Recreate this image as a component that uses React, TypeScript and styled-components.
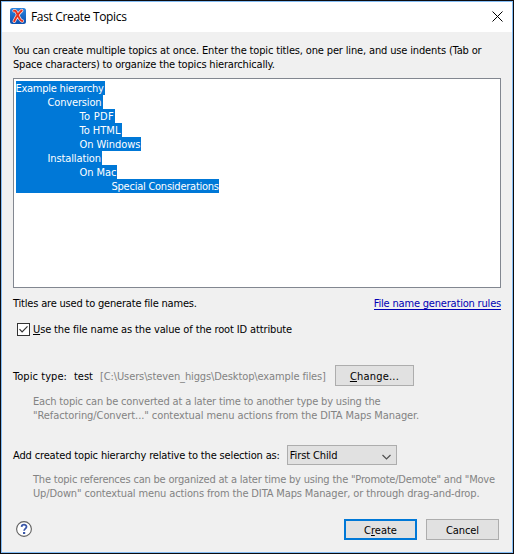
import React from "react";
import styled, { createGlobalStyle } from "styled-components";

const Global = createGlobalStyle`
  * { box-sizing: border-box; }
  body { margin: 0; background: #f0f0f0; }
`;

const Dialog = styled.div`
  width: 514px;
  height: 554px;
  display: flex;
  flex-direction: column;
  border: 1px solid #0b0b0f;
  outline: 1px solid #84bdf5;
  outline-offset: -2px;
  background: #f0f0f0;
  font: 11px/16px "DejaVu Sans Condensed", "DejaVu Sans", sans-serif;
  color: #000;
`;

const TitleBar = styled.header`
  height: 31px;
  flex: none;
  display: flex;
  align-items: flex-start;
  padding: 7px 10px 0 9px;
  background: #fff;
`;

const Title = styled.h1`
  flex: 1;
  margin: 1px 0 0 5px;
  font: 12px/16px "Open Sans", "Noto Sans", sans-serif;
  letter-spacing: -0.34px;
`;

const CloseButton = styled.button`
  width: 11px;
  height: 11px;
  margin-top: 3px;
  padding: 0;
  border: 0;
  background: none;
  display: flex;
`;

const Body = styled.main`
  display: flex;
  flex-direction: column;
  padding: 11px 12px 0 12px;
`;

const Line = styled.div<{ $spacing?: number }>`
  height: 14px;
  white-space: pre;
  letter-spacing: ${(p) => p.$spacing ?? 0}px;
`;

const Editor = styled.div`
  height: 210px;
  margin: 7px 0 8px;
  padding: 2px;
  border: 1px solid #828790;
  background: #fff;
  display: flex;
  flex-direction: column;
  align-items: flex-start;
`;

const Selected = styled(Line)<{ $level: number; $width: number }>`
  width: ${(p) => p.$width}px;
  padding-left: ${(p) => p.$level * 32}px;
  text-indent: -0.5px;
  color: #fff;
  background: #0078d7;
`;

const Row = styled.div<{ $height: number; $top?: number; $left?: number }>`
  height: ${(p) => p.$height}px;
  margin: ${(p) => p.$top ?? 0}px 0 0 ${(p) => p.$left ?? 0}px;
  display: flex;
  align-items: center;
`;

const Spacer = styled.span`
  flex: 1;
`;

const Link = styled.a`
  height: 14px;
  letter-spacing: -0.19px;
  white-space: nowrap;
  color: #0000b4;
  border-bottom: 1px solid #0000b4;
`;

const Check = styled.span`
  width: 13px;
  height: 13px;
  margin-right: 3px;
  border: 1px solid #333;
  background: #fff;
  display: flex;
`;

const Mnemonic = styled.span`
  text-decoration: underline;
  text-decoration-thickness: 1px;
  text-underline-offset: 1px;
  text-decoration-skip-ink: none;
`;

const TypeName = styled(Line)`
  margin-left: 7px;
`;

const Path = styled(Line)`
  width: 235px;
  margin-left: 7px;
  color: #838383;
`;

const Hint = styled.div<{ $top: number }>`
  margin: ${(p) => p.$top}px 0 0 20px;
  color: #838383;
`;

const Button = styled.button<{ $width: number; $primary?: boolean }>`
  width: ${(p) => p.$width}px;
  height: 21px;
  padding: 0;
  border: ${(p) => (p.$primary ? "2px solid #0078d7" : "1px solid #adadad")};
  background: #e1e1e1;
  color: #000;
  font: inherit;
  display: flex;
  align-items: center;
  justify-content: center;
`;

const Select = styled.div`
  width: 110px;
  height: 20px;
  margin-left: 7px;
  padding: 0 5px 0 2px;
  border: 1px solid #adadad;
  background: #e1e1e1;
  display: flex;
  align-items: center;
  justify-content: space-between;
`;

const Chevron = styled.svg`
  margin-top: 3px;
`;

const Actions = styled.footer`
  height: 21px;
  margin: 19px 2px 0 3px;
  display: flex;
  align-items: center;
  gap: 9px;
`;

const HelpMark = styled.svg`
  margin-bottom: 1px;
`;

const outline = [
  { text: "Example hierarchy", level: 0, width: 89, spacing: -0.27 },
  { text: "Conversion", level: 1, width: 87, spacing: -0.15 },
  { text: "To PDF", level: 2, width: 99, spacing: 0.3 },
  { text: "To HTML", level: 2, width: 106, spacing: 0 },
  { text: "On Windows", level: 2, width: 125, spacing: -0.05 },
  { text: "Installation", level: 1, width: 86, spacing: -0.12 },
  { text: "On Mac", level: 2, width: 101, spacing: -0.05 },
  { text: "Special Considerations", level: 3, width: 203, spacing: -0.24 },
];

const AppIcon = () => (
  <svg width="16" height="16" viewBox="0 0 16 16">
    <defs>
      <linearGradient id="tile" x1="0" y1="0" x2="0" y2="1">
        <stop offset="0" stopColor="#2c86e0" />
        <stop offset="1" stopColor="#0c4fae" />
      </linearGradient>
    </defs>
    <rect width="16" height="16" rx="2.5" fill="url(#tile)" />
    <g fill="none" strokeLinecap="round">
      <path d="M4 2.8C5.7 2 6.3 4 7.9 7.4S10.5 13 12.3 13M11.7 2.6C10 4 6 9.5 4.2 13.2" stroke="#f4dcdc" strokeWidth="3.4" />
      <path d="M4 2.8C5.7 2 6.3 4 7.9 7.4S10.5 13 12.3 13M11.7 2.6C10 4 6 9.5 4.2 13.2" stroke="#e8311c" strokeWidth="1.9" />
    </g>
  </svg>
);

const CloseIcon = () => (
  <svg width="11" height="11" viewBox="0 0 11 11">
    <path d="M.5.5l10 10M10.5.5l-10 10" stroke="#000" strokeWidth="1" />
  </svg>
);

const HelpIcon = () => (
  <HelpMark width="16" height="16" viewBox="0 0 16 16" fill="none">
    <circle cx="8" cy="8" r="7.4" fill="#fff" stroke="#606060" strokeWidth="1.1" />
    <path d="M5.6 5.9C5.7 3 10.5 3 10.5 5.8c0 1.7-2.4 1.9-2.4 4" stroke="#3a57a8" strokeWidth="1.8" />
    <path d="M7 11h2.2v2H7z" fill="#3a57a8" />
  </HelpMark>
);

export default function App() {
  return (
    <>
      <Global />
      <Dialog>
        <TitleBar>
          <AppIcon />
          <Title>Fast Create Topics</Title>
          <CloseButton aria-label="Close">
            <CloseIcon />
          </CloseButton>
        </TitleBar>
        <Body>
          <Line $spacing={-0.15}>You can create multiple topics at once. Enter the topic titles, one per line, and use indents (Tab or</Line>
          <Line $spacing={-0.18}>Space characters) to organize the topics hierarchically.</Line>
          <Editor>
            {outline.map((item) => (
              <Selected key={item.text} $level={item.level} $width={item.width} $spacing={item.spacing}>
                {item.text}
              </Selected>
            ))}
          </Editor>
          <Row $height={14}>
            <Line $spacing={-0.19}>Titles are used to generate file names.</Line>
            <Spacer />
            <Link>File name generation rules</Link>
          </Row>
          <Row $height={14} $top={12} $left={4}>
            <Check>
              <svg width="11" height="11" viewBox="0 0 11 11">
                <path d="M1.5 5.2l2.6 2.7 5.4-5.5" fill="none" stroke="#333" strokeWidth="1.2" />
              </svg>
            </Check>
            <Line $spacing={-0.13}>
              <Mnemonic>U</Mnemonic>se the file name as the value of the root ID attribute
            </Line>
          </Row>
          <Row $height={21} $top={29}>
            <Line $spacing={0.06}>Topic type:</Line>
            <TypeName>test</TypeName>
            <Path $spacing={-0.11}>{"[C:\\Users\\steven_higgs\\Desktop\\example files]"}</Path>
            <Button $width={79}>
              <Line $spacing={0.2}>
                <Mnemonic>C</Mnemonic>hange...
              </Line>
            </Button>
          </Row>
          <Hint $top={8}>
            <Line $spacing={-0.17}>Each topic can be converted at a later time to another type by using the</Line>
            <Line $spacing={-0.083}>"Refactoring/Convert..." contextual menu actions from the DITA Maps Manager.</Line>
          </Hint>
          <Row $height={20} $top={23}>
            <Line $spacing={-0.153}>Add created topic hierarchy relative to the selection as:</Line>
            <Select>
              <Line $spacing={-0.12}>First Child</Line>
              <Chevron width="9" height="6" viewBox="0 0 9 6">
                <path d="M.5 1l4 4 4-4" fill="none" stroke="#505050" strokeWidth="1.2" />
              </Chevron>
            </Select>
          </Row>
          <Hint $top={7}>
            <Line $spacing={-0.2}>The topic references can be organized at a later time by using the "Promote/Demote" and "Move</Line>
            <Line $spacing={-0.13}>Up/Down" contextual menu actions from the DITA Maps Manager, or through drag-and-drop.</Line>
          </Hint>
          <Actions>
            <HelpIcon />
            <Spacer />
            <Button $width={73} $primary>
              <Line>
                C<Mnemonic>r</Mnemonic>eate
              </Line>
            </Button>
            <Button $width={73}>
              <Line $spacing={-0.08}>Cancel</Line>
            </Button>
          </Actions>
        </Body>
      </Dialog>
    </>
  );
}
